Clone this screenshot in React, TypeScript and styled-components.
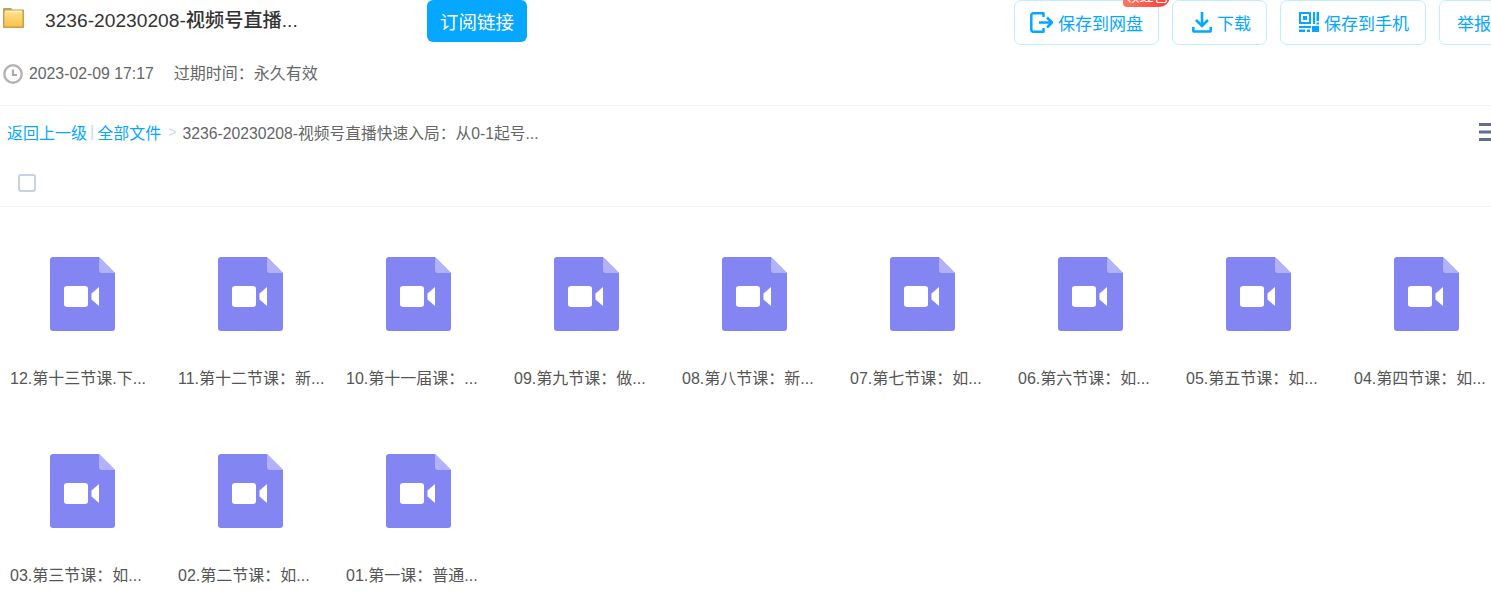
import React from "react";
import styled, { createGlobalStyle } from "styled-components";

const Global = createGlobalStyle`
  html, body { margin: 0; padding: 0; background: #fff; overflow: hidden; }
  body { font-family: "Liberation Sans", "Noto Sans CJK SC", sans-serif; }
`;
const Page = styled.div`
  width: 1491px; height: 613px; overflow: hidden; color: #666;
`;
const TopRow = styled.div`
  display: flex; align-items: flex-start; height: 45px; padding-left: 3px;
`;
const TitleGroup = styled.div`
  display: flex; align-items: flex-start; width: 424px; height: 42px; flex: none;
`;
const FolderWrap = styled.span`
  display: block; flex: none; margin-top: 8px; height: 20px;
`;
const Title = styled.h1`
  margin: 0 0 0 21px; font-size: 19.2px; font-weight: 500; color: #333; white-space: nowrap; line-height: 42px;
`;
const Subscribe = styled.button`
  flex: none; width: 100px; height: 42px; border: 0; padding: 0; border-radius: 6px; background: #06a7ff;
  color: #fff; font: 18.5px "Liberation Sans", "Noto Sans CJK SC", sans-serif;
`;
const Actions = styled.div`
  display: flex; gap: 13px; margin-left: 487px; flex: none;
`;
const Action = styled.button<{ $w: number; $pad: number }>`
  position: relative; display: flex; align-items: center; justify-content: flex-start; gap: 5px; flex: none;
  box-sizing: border-box; width: ${(p) => p.$w}px; height: 45px; padding: 0 0 1px ${(p) => p.$pad}px;
  border: 1px solid #c0ecff; border-radius: 7px;
  background: #fff; color: #06a7ff; font: 17px "Liberation Sans", "Noto Sans CJK SC", sans-serif; white-space: nowrap;
`;
const Badge = styled.span`
  position: absolute; top: -12px; left: 108px; width: 47px; height: 18px; overflow: hidden; border-radius: 0 0 11px 4px;
  background: linear-gradient(90deg, #ff7660, #ff3a3c); color: #fff; font-size: 14px; line-height: 15px; text-align: center;
`;
const MetaRow = styled.div`
  display: flex; align-items: center; height: 20px; margin-top: 19px; padding-left: 3px; font-size: 16px; line-height: 20px;
`;
const DateText = styled.span`
  margin-left: 6px; color: #666; font-size: 15.8px;
`;
const Expire = styled.span`
  margin-left: 20px; color: #666;
`;
const Divider = styled.div`
  height: 1px; background: #f3f4f6;
`;
const TopDivider = styled(Divider)`
  margin-top: 21px;
`;
const Crumbs = styled.div`
  display: flex; align-items: center; height: 20px; margin-top: 16px; padding-left: 7px; font-size: 16px; white-space: nowrap; position: relative;
`;
const CrumbLink = styled.a`
  color: #06a7ff; text-decoration: none;
`;
const Sep = styled.span`
  color: #c8d8ea; margin: 0 3px 0 3px;
`;
const Arrow = styled.span`
  color: #c4d8f4; margin: 0 6px 0 7px; font-size: 14px;
`;
const Current = styled.span`
  color: #666; font-size: 15.75px;
`;
const Menu = styled.span`
  position: absolute; left: 1479px; top: 1px; width: 12px; height: 18px;
`;
const CheckRow = styled.div`
  display: flex; align-items: center; height: 18px; margin-top: 32px; padding-left: 18px;
`;
const Check = styled.span`
  box-sizing: border-box; display: block; width: 18px; height: 18px; border: 2px solid #c6d2e2; border-radius: 3px;
`;
const ListDivider = styled(Divider)`
  margin-top: 14px;
`;
const Grid = styled.div`
  display: grid; grid-template-columns: repeat(9, 168px); grid-auto-rows: 197px; padding-top: 50px;
`;
const Cell = styled.div`
  display: flex; flex-direction: column; align-items: flex-start; padding-left: 10px;
`;
const FileIcon = styled.svg`
  display: block; margin-left: 40px; flex: none;
`;
const Name = styled.div`
  margin-top: 38px; font-size: 16px; line-height: 20px; color: #555; white-space: nowrap;
`;

const names = [
  "12.第十三节课.下...", "11.第十二节课：新...", "10.第十一届课：...", "09.第九节课：做...", "08.第八节课：新...",
  "07.第七节课：如...", "06.第六节课：如...", "05.第五节课：如...", "04.第四节课：如...",
  "03.第三节课：如...", "02.第二节课：如...", "01.第一课：普通...",
];

const Folder = () => (
  <svg width="21" height="20" viewBox="0 0 21 20" style={{ display: "block" }}>
    <defs><linearGradient id="fg" x1="0" y1="0" x2="0" y2="1"><stop offset="0" stopColor="#ffe08a" /><stop offset="1" stopColor="#fcc24a" /></linearGradient></defs>
    <path d="M0 1C0 .4.4 0 1 0h7l1.500 1.500H20c.6 0 1 .4 1 1V19c0 .6-.4 1-1 1H1c-.6 0-1-.4-1-1z" fill="#c9a04a" />
    <path d="M1.500 3.500h18v15h-18z" fill="url(#fg)" />
    <path d="M2 2.500h17v1.500H2z" fill="#fff3cf" />
  </svg>
);
const Clock = () => (
  <svg width="20" height="20" viewBox="0 0 20 20" fill="none">
    <circle cx="10" cy="10" r="8.700" stroke="#b3b3b3" strokeWidth="2.400" />
    <path d="M10 5.500V11H14" stroke="#aaa" strokeWidth="2.200" />
  </svg>
);
const SaveIcon = () => (
  <svg width="23" height="21" viewBox="0 0 23 21" fill="none" stroke="#06a7ff" strokeWidth="2.500" strokeLinejoin="round">
    <path d="M13.500 5V1.300H3.500a2.200 2.200 0 0 0-2.200 2.200v14a2.200 2.200 0 0 0 2.200 2.200h10V16" />
    <path d="M9 10.500h12.500M17 5.500l5 5-5 5" />
  </svg>
);
const DownloadIcon = () => (
  <svg width="20" height="21" viewBox="0 0 20 21" fill="none" stroke="#06a7ff" strokeWidth="2.600">
    <path d="M10 0v13M4 8l6 6 6-6" />
    <path d="M1.300 15v3.200c0 .8.5 1.300 1.300 1.300h14.800c.8 0 1.300-.5 1.300-1.300V15" />
  </svg>
);
const QrIcon = () => (
  <svg width="20" height="20" viewBox="0 0 20 20" fill="#06a7ff">
    <path fillRule="evenodd" d="M0 0h12v12H0zM2 2v8h8V2zM4 4h4v4H4z" />
    <path d="M14 0h2v12h-2zM17.500 0h2.500v9h-2.500zM17.500 10.500h2.500v2h-2.500zM0 14h12v2H0zM0 17.500h6V20H0zM8 17.500h3V20H8zM13 14h7v6h-7z" />
  </svg>
);
const MenuIcon = () => (
  <svg width="12" height="18" viewBox="0 0 12 18" fill="#636d8f" style={{ display: "block" }}>
    <path d="M0 0h12v3H0zM0 7.500h12v3H0zM0 15h12v3H0z" />
  </svg>
);
const VideoFile = () => (
  <FileIcon width="65" height="74" viewBox="0 0 65 74">
    <path d="M3 0h46l16 16v55a3 3 0 0 1-3 3H3a3 3 0 0 1-3-3V3a3 3 0 0 1 3-3z" fill="#8385f2" />
    <path d="M49 0l16 16H52a3 3 0 0 1-3-3z" fill="#b1b2fb" />
    <rect x="14" y="29" width="24" height="21" rx="3" fill="#fff" />
    <path d="M49 30v19l-7.500-6.500v-6z" fill="#fff" />
  </FileIcon>
);

export default function App() {
  return (
    <Page>
      <Global />
      <TopRow>
        <TitleGroup>
          <FolderWrap><Folder /></FolderWrap>
          <Title>3236-20230208-视频号直播...</Title>
        </TitleGroup>
        <Subscribe>订阅链接</Subscribe>
        <Actions>
          <Action $w={145} $pad={15}><SaveIcon />保存到网盘<Badge>领红包</Badge></Action>
          <Action $w={95} $pad={19}><DownloadIcon />下载</Action>
          <Action $w={146} $pad={18}><QrIcon />保存到手机</Action>
          <Action $w={80} $pad={17}>举报</Action>
        </Actions>
      </TopRow>
      <MetaRow>
        <Clock />
        <DateText>2023-02-09 17:17</DateText>
        <Expire>过期时间：永久有效</Expire>
      </MetaRow>
      <TopDivider />
      <Crumbs>
        <CrumbLink>返回上一级</CrumbLink>
        <Sep>|</Sep>
        <CrumbLink>全部文件</CrumbLink>
        <Arrow>&gt;</Arrow>
        <Current>3236-20230208-视频号直播快速入局：从0-1起号...</Current>
        <Menu><MenuIcon /></Menu>
      </Crumbs>
      <CheckRow><Check /></CheckRow>
      <ListDivider />
      <Grid>
        {names.map((n) => (
          <Cell key={n}>
            <VideoFile />
            <Name>{n}</Name>
          </Cell>
        ))}
      </Grid>
    </Page>
  );
}
